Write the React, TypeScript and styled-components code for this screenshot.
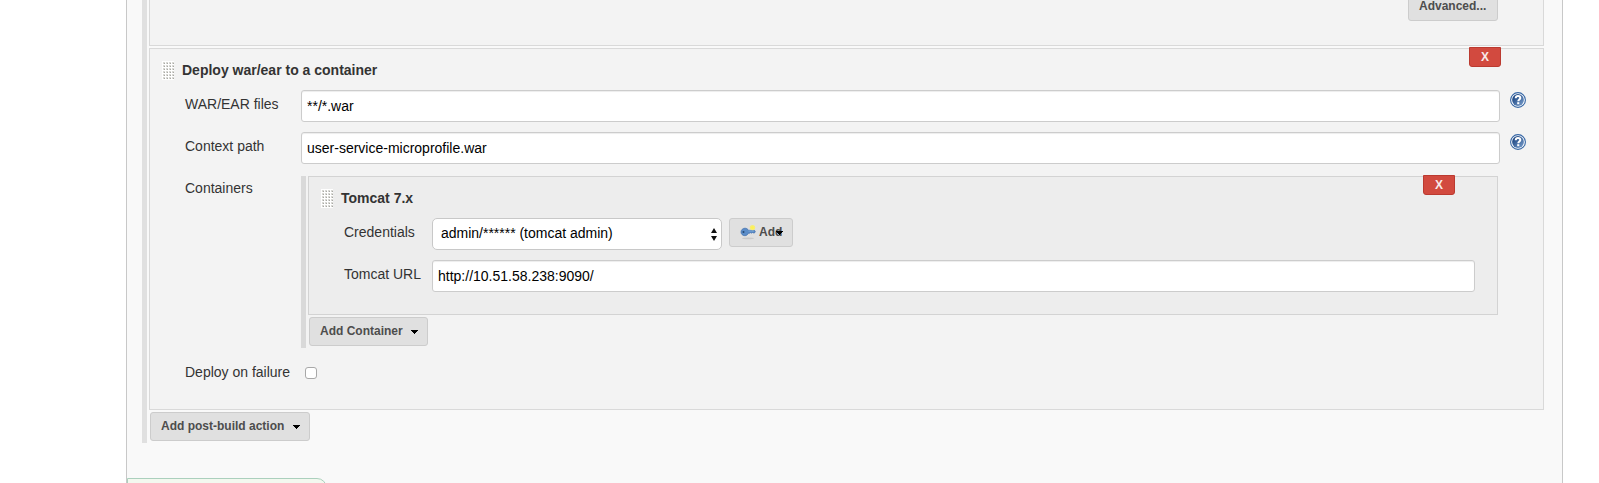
import React from 'react';
import styled, { createGlobalStyle } from 'styled-components';

const GlobalStyle = createGlobalStyle`
  *, *::before, *::after { box-sizing: border-box; }
  body {
    margin: 0;
    background: #fff;
    color: #333;
    font: 14px/16px "Liberation Sans", Arial, sans-serif;
  }
`;

const Page = styled.div`
  height: 483px;
  overflow: hidden;
`;

const ConfigPanel = styled.main`
  display: flex;
  flex-direction: column;
  justify-content: space-between;
  width: 1437px;
  height: 483px;
  margin-left: 126px;
  border: solid #c8c8c8;
  border-width: 0 1px;
  background: #f9f9f9;
`;

const ActionList = styled.section`
  width: 1402px;
  height: 443px;
  margin-left: 15px;
  padding-left: 2px;
  border-left: 5px solid #e0e0e0;
`;

const PreviousBlock = styled.div`
  display: flex;
  justify-content: flex-end;
  align-items: flex-start;
  height: 46px;
  margin-bottom: 2px;
  padding-right: 45px;
  border: 1px solid #d9d9d9;
  border-top: 0;
  background: #f3f3f3;
`;

const Block = styled.div<{ $nested?: boolean }>`
  position: relative;
  height: ${(p) => (p.$nested ? 139 : 362)}px;
  padding: 12px 0 0 12px;
  border: 1px solid ${(p) => (p.$nested ? '#d3d3d3' : '#d9d9d9')};
  background: ${(p) => (p.$nested ? '#ededed' : '#f3f3f3')};
`;

const BlockHeader = styled.header`
  display: flex;
  align-items: flex-start;
  gap: 8px;
  height: 19px;
`;

const BlockTitle = styled.h3`
  margin: 1px 0 0;
  font-size: 14px;
  line-height: 16px;
  font-weight: bold;
`;

const DeleteButton = styled.button`
  position: absolute;
  top: -2px;
  right: 42px;
  width: 32px;
  height: 20px;
  padding: 0;
  border: 1px solid #bb3a30;
  border-radius: 0 0 3px 3px;
  background: #d24a3f;
  color: #f8e9e8;
  font: bold 12px/17px "Liberation Sans", Arial, sans-serif;
`;

const Fields = styled.div<{ $nested?: boolean }>`
  display: flex;
  flex-direction: column;
  gap: 10px;
  padding: 10px 0 0 23px;
`;

const Field = styled.div<{ $label: number }>`
  display: grid;
  grid-template-columns: ${(p) => p.$label}px auto 16px;
  justify-content: start;
  align-items: start;
`;

const Label = styled.label`
  padding-top: 6px;
  white-space: nowrap;
`;

const TextInput = styled.input<{ $width: number }>`
  width: ${(p) => p.$width}px;
  height: 32px;
  padding: 0 5px 1px;
  border: 1px solid #ccc;
  border-radius: 3px;
  background: #fff;
  box-shadow: inset 0 1px 1px rgba(0, 0, 0, 0.075);
  color: #000;
  font: 14px "Liberation Sans", Arial, sans-serif;
  outline: none;
`;

const HelpSvg = styled.svg`
  display: block;
  margin: 2px 0 0 10px;
`;

const ContainerList = styled.div`
  width: 1197px;
  height: 172px;
  margin-top: 2px;
  padding-left: 2px;
  border-left: 5px solid #d9d9d9;
`;

const Button = styled.button<{ $width: number }>`
  display: flex;
  align-items: center;
  justify-content: space-between;
  width: ${(p) => p.$width}px;
  height: 29px;
  padding: 0 9px 2px 10px;
  border: 1px solid #ccc;
  border-radius: 3px;
  background: #e0e0e0;
  color: #4d4d4d;
  white-space: nowrap;
  font: bold 12px/14px "Liberation Sans", Arial, sans-serif;
`;

const AdvancedButton = styled(Button)`
  margin-top: -8px;
`;

const MenuButton = styled(Button)`
  margin: 2px 0 0 1px;
`;

const CredentialsButton = styled(Button)`
  position: relative;
  justify-content: flex-start;
  gap: 3px;
  margin-left: 7px;
`;

const Caret = styled.svg`
  display: block;
  margin: 3px 0 0;
`;

const OverlaidCaret = styled(Caret)`
  position: absolute;
  top: 9px;
  right: 9px;
`;

const CredentialsControl = styled.div`
  display: flex;
  align-items: flex-start;
`;

const Select = styled.div`
  display: flex;
  align-items: center;
  justify-content: space-between;
  width: 290px;
  height: 32px;
  padding: 0 4px 0 8px;
  border: 1px solid #c8c8c8;
  border-radius: 5px;
  background: #fff;
  color: #000;
`;

const SelectValue = styled.span`
  padding-bottom: 2px;
  letter-spacing: -0.01px;
`;

const Checkbox = styled.input`
  appearance: none;
  width: 12px;
  height: 12px;
  margin: 9px 0 0 4px;
  border: 1px solid #a8a8a8;
  border-radius: 3px;
  background: #fff;
`;

const SaveBar = styled.div`
  width: 200px;
  height: 5px;
  overflow: hidden;

  &::before {
    content: '';
    display: block;
    height: 30px;
    border: 1px solid #abd0bd;
    border-radius: 0 10px 0 0;
    background: #f3f8ef;
  }
`;

const Grip = () => (
  <svg width="12" height="19" viewBox="0 0 12 19" shapeRendering="crispEdges">
    <path fill="#fff" d="M0 0h12v19H0z" />
    {[1, 4, 7, 10, 13, 16].map((y) =>
      [1, 4, 7, 10].map((x) => (
        <g key={`${x}-${y}`}>
          <path fill="#d8d8d4" d={`M${x} ${y}h2v2h-2z`} />
          <path fill="#a8a8a4" d={`M${x + 1} ${y + 1}h1v1h-1z`} />
        </g>
      )),
    )}
  </svg>
);

const HelpIcon = () => (
  <HelpSvg width="16" height="16" viewBox="0 0 16 16">
    <defs>
      <linearGradient id="help" x1="0" y1="0" x2="1" y2="1">
        <stop offset="0.2" stopColor="#214a86" />
        <stop offset="1" stopColor="#7da2cf" />
      </linearGradient>
    </defs>
    <circle cx="8" cy="8" r="7.4" fill="#fff" stroke="#3465a4" strokeWidth="1.1" />
    <circle cx="8" cy="8" r="5.9" fill="url(#help)" />
    <path
      d="M5.7 6.2C5.8 4.6 6.7 4 8 4c1.400 0 2.300.7 2.300 1.900 0 1.500-2 1.600-2 3.300"
      fill="none"
      stroke="#fff"
      strokeWidth="2"
    />
    <path d="M7.200 10.200h2.100v2H7.200z" fill="#fff" />
  </HelpSvg>
);

const KeyIcon = () => (
  <svg width="16" height="16" viewBox="0 0 16 16">
    <ellipse cx="8" cy="14.4" rx="6" ry="0.8" fill="#c9c9c9" />
    <path
      d="M5 4.2c1.7 0 2.8.9 3.4 2.1h6l.9 1-.8 1.7h-1.3l-.7-.7-.8.9-1.1-.6-1 .6H8.4C7.7 10.8 6.5 11.7 4.8 11.7 2.5 11.7 1 10 1 8s1.7-3.800 4-3.800z"
      fill="#5a8cc8"
      stroke="#3d6dac"
      strokeWidth="0.7"
    />
    <path d="M8.5 7H14" stroke="#86aedd" strokeWidth="0.8" />
    <circle cx="3.5" cy="8" r="1" fill="#24476f" />
    <circle cx="12.5" cy="3.6" r="2.7" fill="#f7ed73" />
    <circle cx="12.5" cy="3.6" r="1.2" fill="#fff34b" />
  </svg>
);

const CaretIcon = ({ as: Component = Caret }: { as?: React.ElementType }) => (
  <Component width="7" height="4" viewBox="0 0 7 4" shapeRendering="crispEdges">
    <path d="M0 0h7v1H6v1H5v1H4v1H3V3H2V2H1V1H0z" fill="#000" />
  </Component>
);

const SelectArrows = () => (
  <svg width="6" height="13" viewBox="0 0 6 13">
    <path d="M3 0l3 5H0zM0 8h6l-3 5z" fill="#111" />
  </svg>
);

const TomcatContainer = () => (
  <Block $nested>
    <DeleteButton>X</DeleteButton>
    <BlockHeader>
      <Grip />
      <BlockTitle>Tomcat 7.x</BlockTitle>
    </BlockHeader>
    <Fields>
      <Field $label={88}>
        <Label>Credentials</Label>
        <CredentialsControl>
          <Select role="combobox">
            <SelectValue>admin/****** (tomcat admin)</SelectValue>
            <SelectArrows />
          </Select>
          <CredentialsButton $width={64}>
            <KeyIcon />
            Add
            <CaretIcon as={OverlaidCaret} />
          </CredentialsButton>
        </CredentialsControl>
      </Field>
      <Field $label={88}>
        <Label>Tomcat URL</Label>
        <TextInput $width={1043} defaultValue="http://10.51.58.238:9090/" />
      </Field>
    </Fields>
  </Block>
);

export default function App() {
  return (
    <Page>
      <GlobalStyle />
      <ConfigPanel>
        <ActionList>
          <PreviousBlock>
            <AdvancedButton $width={90}>Advanced...</AdvancedButton>
          </PreviousBlock>
          <Block>
            <DeleteButton>X</DeleteButton>
            <BlockHeader>
              <Grip />
              <BlockTitle>Deploy war/ear to a container</BlockTitle>
            </BlockHeader>
            <Fields>
              <Field $label={116}>
                <Label>WAR/EAR files</Label>
                <TextInput $width={1199} defaultValue="**/*.war" />
                <HelpIcon />
              </Field>
              <Field $label={116}>
                <Label>Context path</Label>
                <TextInput $width={1199} defaultValue="user-service-microprofile.war" />
                <HelpIcon />
              </Field>
              <Field $label={116}>
                <Label>Containers</Label>
                <ContainerList>
                  <TomcatContainer />
                  <MenuButton $width={119}>
                    Add Container
                    <CaretIcon />
                  </MenuButton>
                </ContainerList>
              </Field>
              <Field $label={116}>
                <Label>Deploy on failure</Label>
                <Checkbox type="checkbox" />
              </Field>
            </Fields>
          </Block>
          <MenuButton $width={160}>
            Add post-build action
            <CaretIcon />
          </MenuButton>
        </ActionList>
        <SaveBar />
      </ConfigPanel>
    </Page>
  );
}
